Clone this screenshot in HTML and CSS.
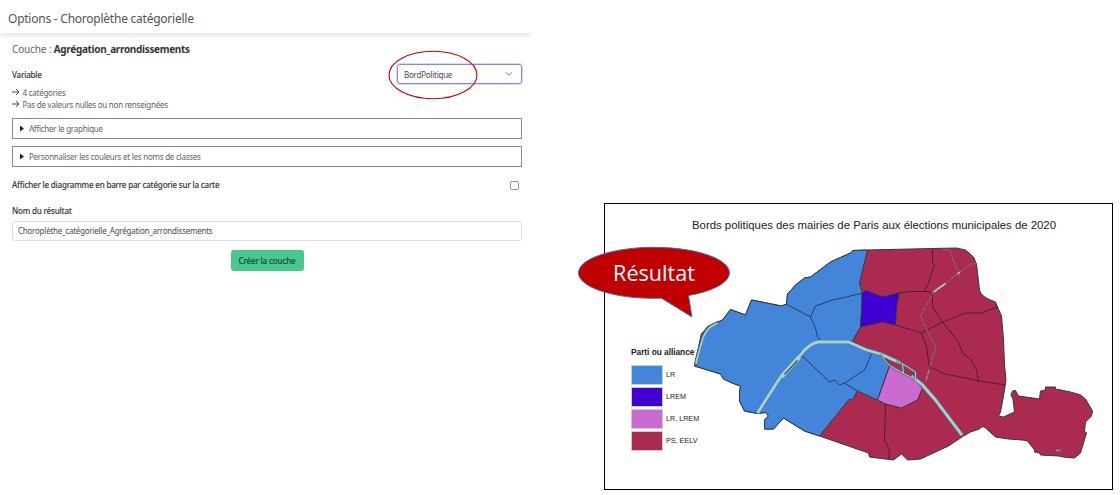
FILE: index.html
```html
<!DOCTYPE html>
<html lang="fr">
<head>
<meta charset="utf-8">
<title>Choroplèthe catégorielle</title>
<link rel="stylesheet" href="styles.css">
</head>
<body>
<main class="page">
  <section class="panel">
    <header class="panel-header">Options - Choroplèthe catégorielle</header>
    <div class="panel-body">
      <p class="layer">Couche : <strong>Agrégation_arrondissements</strong></p>
      <div class="field-row variable-row">
        <label class="label">Variable</label>
        <div class="select"><span>BordPolitique</span>
          <svg class="chevron" viewBox="0 0 8 6"><path d="M1 1.2 4 4.4 7 1.2"/></svg>
          <svg class="annotation" viewBox="0 0 90 50"><ellipse cx="45" cy="25" rx="44" ry="23.7"/></svg>
        </div>
      </div>
      <ul class="notes">
        <li><svg class="arrow" viewBox="0 0 8 8"><path d="M0 4H7M4 1 7 4 4 7"/></svg>4 catégories</li>
        <li><svg class="arrow" viewBox="0 0 8 8"><path d="M0 4H7M4 1 7 4 4 7"/></svg>Pas de valeurs nulles ou non renseignées</li>
      </ul>
      <div class="details"><i class="marker"></i><span>Afficher le graphique</span></div>
      <div class="details"><i class="marker"></i><span>Personnaliser les couleurs et les noms de classes</span></div>
      <div class="field-row check-row">
        <label class="label">Afficher le diagramme en barre par catégorie sur la carte</label>
        <span class="checkbox"></span>
      </div>
      <label class="label name-label">Nom du résultat</label>
      <div class="input"><span>Choroplèthe_catégorielle_Agrégation_arrondissements</span></div>
      <button class="create">Créer la couche</button>
    </div>
  </section>

  <section class="result">
    <h1 class="map-title">Bords politiques des mairies de Paris aux élections municipales de 2020</h1>
    <svg class="map" viewBox="604.5 204 507 285">
      <path class="ps edge" d="M694 366 697 352 701 334 708 326 722 320 730 309.500 745 315 751 300 781 306 786 304 787 294 795 285 804 278 810 277 830 262 850 253 852 250.500 867 250 932 248.500 956 248 965 250 973 257 976 264 979 290Q980 297 995 302L997 307 1001 316 1003 340 1004 365 1005.500 380 1003 396 1000 412 998 416 1003 417 1014 412 1012.500 399 1010.500 395 1012 391 1015 390.500 1018 396 1039 399 1040 391 1045 390V387H1055V389L1070 392 1080 395 1085 399 1092 411 1091 416 1085 422 1084 431 1086 433 1080 453 1074 458 1066 457.500 1058 456 1040 455 1039 453 1034 452V450L1027 441 1022 440 1008 439 995 437 985 428Q982 425 979 429L970 432 963 436 948 446 920 459 907 460 901 454 893 460 869 457 868 453 819 436 804 431 783 418 773 429H764V420L768 416 765 412.500 757 413.500 744 411 739 401V392L740 386 734 384 723 379 720 374Z"/>
      <path class="lr edge" d="M694 366 697 352 701 334 708 326 722 320 730 309.500 745 315 751 300 781 306 786 304 787 294 795 285 804 278 810 277 830 262 850 253 852 250.500 867 250 859 283 862 293 861 312 860 327 852 341 870 351 884 356 889 366 877 400 857 391 852 400 849 399 819 436 804 431 783 418 773 429H764V420L768 416 765 412.500 757 413.500 744 411 739 401V392L740 386 734 384 723 379 720 374Z"/>
      <path class="lrem edge" d="M861.500 293 866 290.500 882 297 898.500 293 896 308 895 325 882 322 860 327 861 312Z"/>
      <path class="mix edge" d="M889 366 903 374 915 380 922 388 917 400 901 408 885 404 877 400Z"/>
      <path class="bound" d="M785.500 304 810 317 815 306 832 300 846 297 862 293M810 317 815 328 817 337 821 341M801 355 829 382 834 380 839 385 844 383 864 370 871 354M844 383 857 391"/>
      <path class="bound" d="M932 249V263L934 264 928 283 924 291M898 293 910 291.500 929 291.500 932 296V307L942 322 958 342 962 353 970 359 976 370 978 381M895 325 921 333 942 322 955 317 964 313 980 313 997 307M921 333 926 347 929 367 945 374 960 377 978 381 1005 385M885 404 884 440 889 450 888 459"/>
      <path class="bank" d="M695 366Q696 358 700 345 702 333 708 327L718 322"/>
      <path class="bank-water" d="M695.500 364Q697 356 701 343 703 334 709 327.500L717 323"/>
      <path class="shore" d="M757 413.500 780 377 800 355Q809 343 818 342H848L866 350 880 354 900 363"/>
      <path class="island-shore" d="M781 377 799 357"/>
      <path class="water" d="M757 413 780 377 800 355Q809 343 818 342H848L866 350 880 354 900 363"/>
      <path class="island-water" d="M781 377 799 357"/>
      <path class="island" d="M784 374.500 797 360.500"/>
      <path class="shore" d="M912 377 921 384 935 400 961.500 435.500"/>
      <path class="water" d="M911 376 921 384 935 400 961.500 435"/>
      <path class="arm-shore" d="M880 354Q885 362 890 366L904 374 914 379M896 361 904 365 915 372V380M902 364 903 373"/>
      <path class="arm" d="M880 354Q885 362 890 366L904 374 914 379M896 361 904 365 915 372V380M902 364 903 373"/>
      <path class="canal" d="M942 249 949 250 958 273 960 278M951 261 953 260M958 273 970 264 976 263.500M958 273 933 292 920 316 927 331 935 346 934 352 929 368"/>
      <path class="basin-edge" d="M928.500 370 925 382"/>
      <path class="basin" d="M933 292 945 283.500M957 274 959 272"/>
      <path class="lake" d="M1055.500 450.500 1060 450.500"/>
    </svg>
    <div class="legend">
      <h2 class="legend-title">Parti ou alliance</h2>
      <ul class="legend-list">
        <li><i class="swatch lr-bg"></i>LR</li>
        <li><i class="swatch lrem-bg"></i>LREM</li>
        <li><i class="swatch mix-bg"></i>LR, LREM</li>
        <li><i class="swatch ps-bg"></i>PS, EELV</li>
      </ul>
    </div>
    <div class="callout">
      <svg class="bubble" viewBox="0 0 154 74"><path d="M83.500 52.200A75.500 25.500 0 1 1 110.500 49.500L114 71Z"/></svg>
      <span class="callout-text">Résultat</span>
    </div>
  </section>
</main>
</body>
</html>
```

FILE: styles.css
```css
* { box-sizing: border-box; }
body { margin: 0; background: #fff; }
h1, h2, p, ul { margin: 0; padding: 0; font-weight: normal; list-style: none; }
.page { width: 1120px; height: 495px; display: flex; overflow: hidden; }
.panel { width: 532px; font-family: "Noto Sans", sans-serif; color: #4a4a4a; font-size: 8px; letter-spacing: -.24px; }
.panel-header { height: 33px; padding: 6px 8px 0; font-size: 12px; line-height: 26px; color: #505459; box-shadow: 0 2px 6px rgba(10, 10, 10, .13); clip-path: inset(0 0 -12px 0); white-space: nowrap; }
.panel-body { padding: 9px 10px 0 12px; }
.layer { font-size: 10px; line-height: 15px; color: #666; letter-spacing: -.15px; }
.layer strong { color: #363636; font-weight: 700; letter-spacing: -.32px; }
.field-row { display: flex; justify-content: space-between; align-items: center; }
.label { font-weight: 500; color: #363a40; line-height: 12px; letter-spacing: -.18px; -webkit-text-stroke: .1px #363a40; }
.variable-row { height: 20px; margin-top: 7px; }
.variable-row .label { padding-top: 1px; }
.select { position: relative; width: 125px; height: 20px; padding: 0 8px 0 6px; display: flex; align-items: center; justify-content: space-between; border: 1px solid #7f88fb; border-radius: 3px; box-shadow: 0 0 0 1px #d5d8ff; }
.chevron { width: 8px; height: 6px; fill: none; stroke: #7580f0; stroke-width: 1; }
.annotation { position: absolute; left: -10px; top: -15px; width: 90px; height: 50px; fill: none; stroke: #c00000; stroke-width: 1.1; }
.notes { margin-top: 3px; color: #5c5f64; }
.notes li { height: 12px; line-height: 12px; display: flex; align-items: center; gap: 2.500px; }
.arrow { width: 8px; height: 8px; margin-top: -3px; fill: none; stroke: #454b52; stroke-width: 1; }
.details { height: 21px; margin-top: 7px; padding-left: 7px; display: flex; align-items: center; gap: 6px; border: 1px solid #888b94; color: #5f636a; }
.marker { width: 4px; height: 6px; margin-right: -1px; background: #222; clip-path: polygon(0 0, 100% 50%, 0 100%); }
.check-row { height: 14px; margin-top: 11px; padding-right: 3px; }
.checkbox { width: 9px; height: 9px; border: 1px solid #959595; border-radius: 2px; }
.name-label { display: block; margin-top: 13px; }
.input { height: 20px; margin-top: 4px; padding-left: 5px; line-height: 18px; border: 1px solid #dedfe3; border-radius: 3px; }
.create { display: block; width: 73px; height: 21px; margin: 9px auto 0; padding: 0; border: 0; border-radius: 3px; background: #48c78e; color: #174e37; font: 500 8px "Noto Sans", sans-serif; letter-spacing: -.14px; -webkit-text-stroke: .1px #174e37; }
.result { position: relative; width: 509px; height: 287px; margin: 203px 0 0 72px; border: 1px solid #000; font-family: "Liberation Sans", Arial, sans-serif; color: #222; }
.map-title { position: absolute; left: 87px; top: 14px; font-size: 11.4px; letter-spacing: -.01px; line-height: 15px; white-space: nowrap; }
.map { display: block; width: 507px; height: 285px; }
.edge { stroke: #303844; stroke-width: 1; stroke-linejoin: round; }
.lr { fill: #4385d9; }
.lrem { fill: #4000d3; }
.mix { fill: #cc6bcf; }
.ps { fill: #ab2b50; }
.bound { fill: none; stroke: #201828; stroke-opacity: .75; stroke-width: .9; }
.shore, .water, .arm-shore, .arm, .canal, .basin, .basin-edge, .lake, .bank, .bank-water, .island, .island-water, .island-shore { fill: none; stroke-linejoin: round; }
.shore { stroke: #5d7480; stroke-width: 4; }
.water { stroke: #9fd5d8; stroke-width: 2.8; }
.arm-shore { stroke: #526a75; stroke-width: 2.2; }
.arm { stroke: #9fd5d8; stroke-width: 1; }
.bank { stroke: #486570; stroke-width: 3; }
.bank-water { stroke: #9fd5d8; stroke-width: 1.7; }
.island-shore { stroke: #5d7480; stroke-width: 5.5; }
.island-water { stroke: #9fd5d8; stroke-width: 4.3; }
.island { stroke: #35606f; stroke-width: 1.5; }
.canal { stroke: #78757c; stroke-width: 1; stroke-dasharray: 5 1; }
.basin { stroke: #a6c9cf; stroke-width: 1.7; }
.basin-edge { stroke: #8b8d94; stroke-width: 1.4; stroke-dasharray: 5 1; }
.lake { stroke: #899ea8; stroke-width: 1.5; }
.legend { position: absolute; left: 26px; top: 142px; }
.legend-title { font-size: 8.4px; letter-spacing: -.05px; font-weight: 700; line-height: 12px; white-space: nowrap; }
.legend-list { display: grid; gap: 2px; margin-top: 7px; font-size: 7.200px; }
.legend-list li { height: 20px; display: flex; align-items: center; gap: 3px; line-height: 18px; }
.swatch { width: 32px; height: 20px; border: 1px solid #ccc; }
.lr-bg { background: #4385d9; }
.lrem-bg { background: #4000d3; }
.mix-bg { background: #cc6bcf; }
.ps-bg { background: #ab2b50; }
.callout { position: absolute; left: -27px; top: 42px; width: 154px; height: 74px; }
.bubble { display: block; width: 154px; height: 74px; fill: #c00000; stroke: #41719c; stroke-width: 1; }
.callout-text { position: absolute; left: 0; top: 13px; width: 152px; text-align: center; color: #fff; font: 21.6px/28px "Open Sans", sans-serif; }
```
